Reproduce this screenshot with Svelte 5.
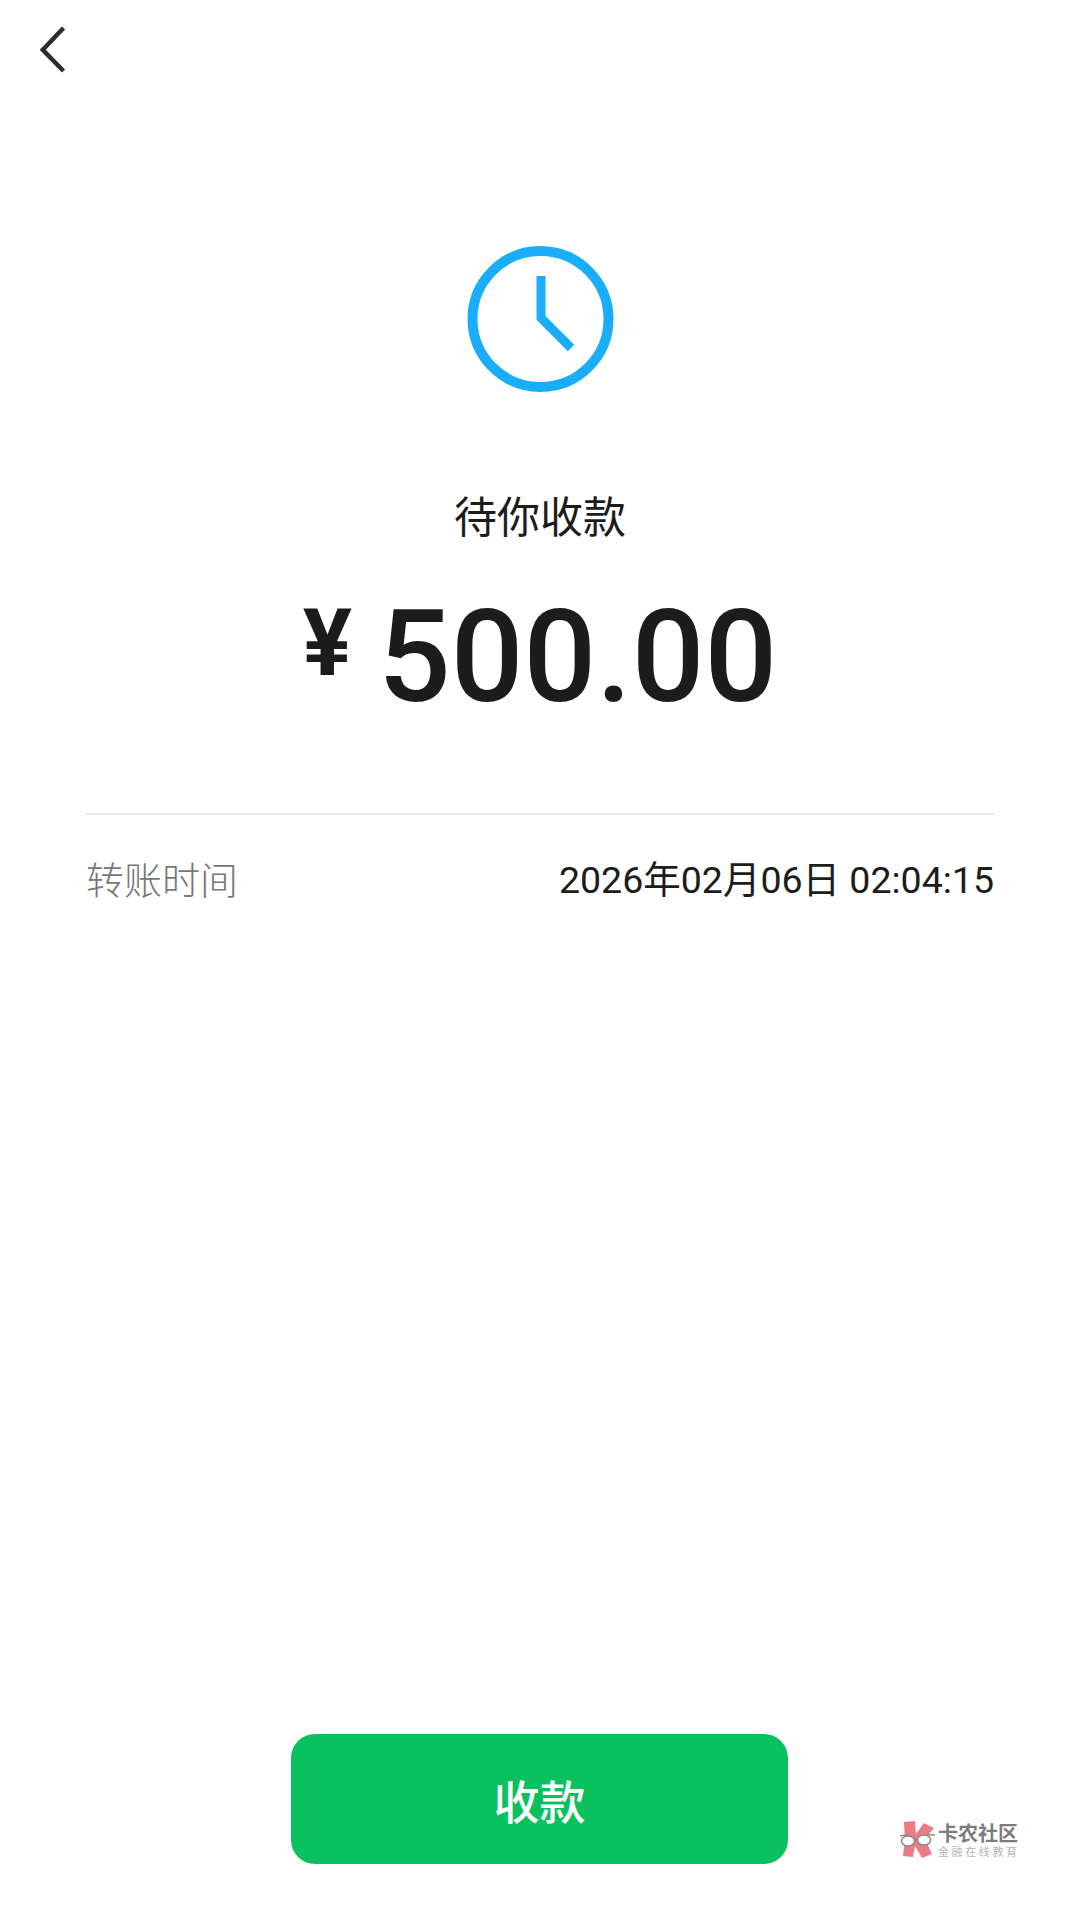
<script lang="ts">
  const amount = '500.00'
  const label = '转账时间'
  const time = '2026年02月06日 02:04:15'
</script>

<div class="page">
  <header class="nav">
    <svg class="back" width="26" height="50" viewBox="0 0 26 50">
      <path d="M23.5 2 L2.8 23.8 L23.5 45" fill="none" stroke="#2e2e2e" stroke-width="4.5" />
    </svg>
  </header>

  <main class="status">
    <svg class="clock" width="147" height="146" viewBox="0 0 147 146">
      <circle cx="73.5" cy="73" r="68" fill="none" stroke="#1aaefa" stroke-width="10" />
      <path d="M74 30 V72 L104 102" fill="none" stroke="#1aaefa" stroke-width="9" />
    </svg>
    <div class="title">待你收款</div>
    <div class="amount"><span class="yen">¥</span><span>{amount}</span></div>
  </main>

  <section class="detail">
    <span class="label">{label}</span>
    <span class="value">{time}</span>
  </section>

  <footer class="actions">
    <button class="pay">收款</button>
  </footer>

  <div class="watermark">
    <svg width="36" height="38" viewBox="0 0 36 38">
      <path d="M4 1 L15 0 L16 13 L24 2 L34 7 L25 18 L32 33 L22 37 L15 25 L13 36 L3 35 L5 19 Z" fill="#ec7b86" />
      <path d="M0 15 C6 13 11 15 16 19 C21 15 28 13 35 14" fill="none" stroke="#8b8b8b" stroke-width="1.6" />
      <ellipse cx="8" cy="20" rx="6.5" ry="5" fill="#fff" stroke="#8b8b8b" stroke-width="1.6" />
      <ellipse cx="24" cy="19" rx="6.5" ry="5" fill="#fff" stroke="#8b8b8b" stroke-width="1.6" />
    </svg>
    <div class="mark-text">
      <div class="mark-name">卡农社区</div>
      <div class="mark-sub">金融在线教育</div>
    </div>
  </div>
</div>

<style>
  :global(body) {
    margin: 0;
    background: #fff;
  }

  .page {
    position: relative;
    width: 1080px;
    height: 1909px;
    display: flex;
    flex-direction: column;
    background: #fff;
    font-family: Roboto, "Noto Sans CJK SC", sans-serif;
    overflow: hidden;
  }

  .nav {
    height: 246px;
    padding: 26px 0 0 40px;
    box-sizing: border-box;
  }

  .back {
    display: block;
  }

  .status {
    display: flex;
    flex-direction: column;
    align-items: center;
    border-bottom: 2px solid #ebebeb;
    margin: 0 86px;
    height: 569px;
    box-sizing: border-box;
  }

  .clock {
    display: block;
  }

  .title {
    margin-top: 92px;
    font-size: 43px;
    line-height: 60px;
    color: #1c1c1c;
    font-family: "Noto Sans CJK SC", sans-serif;
    font-weight: 400;
  }

  .amount {
    margin-top: 38px;
    display: flex;
    align-items: baseline;
    color: #1c1c1c;
    font-size: 128px;
    line-height: 150px;
    font-weight: 500;
  }

  .yen {
    font-size: 92px;
    font-weight: 700;
    margin-right: 26px;
    position: relative;
    top: -26px;
  }

  .detail {
    display: flex;
    justify-content: space-between;
    align-items: center;
    margin: 0 86px;
    padding-top: 34px;
    line-height: 52px;
  }

  .label {
    font-family: "Noto Sans CJK SC", sans-serif;
    font-size: 38px;
    font-weight: 300;
    color: #777;
  }

  .value {
    font-size: 37.5px;
    color: #1c1c1c;
    padding-top: 5px;
  }

  .actions {
    margin-top: auto;
    padding: 0 1px 45px 0;
    display: flex;
    justify-content: center;
  }

  .pay {
    width: 497px;
    height: 130px;
    border: none;
    border-radius: 24px;
    background: #0ac160;
    color: #fff;
    font-family: "Noto Sans CJK SC", sans-serif;
    font-size: 46px;
    font-weight: 500;
    padding: 0;
  }

  .watermark {
    position: absolute;
    left: 900px;
    top: 1821px;
    display: flex;
    align-items: center;
    gap: 2px;
    font-family: "Noto Sans CJK SC", sans-serif;
  }

  .mark-name {
    font-size: 20px;
    line-height: 22px;
    font-weight: 700;
    color: #7c7c7c;
  }

  .mark-sub {
    font-size: 11px;
    line-height: 14px;
    letter-spacing: 2.6px;
    color: #b5b5b5;
    white-space: nowrap;
  }
</style>
